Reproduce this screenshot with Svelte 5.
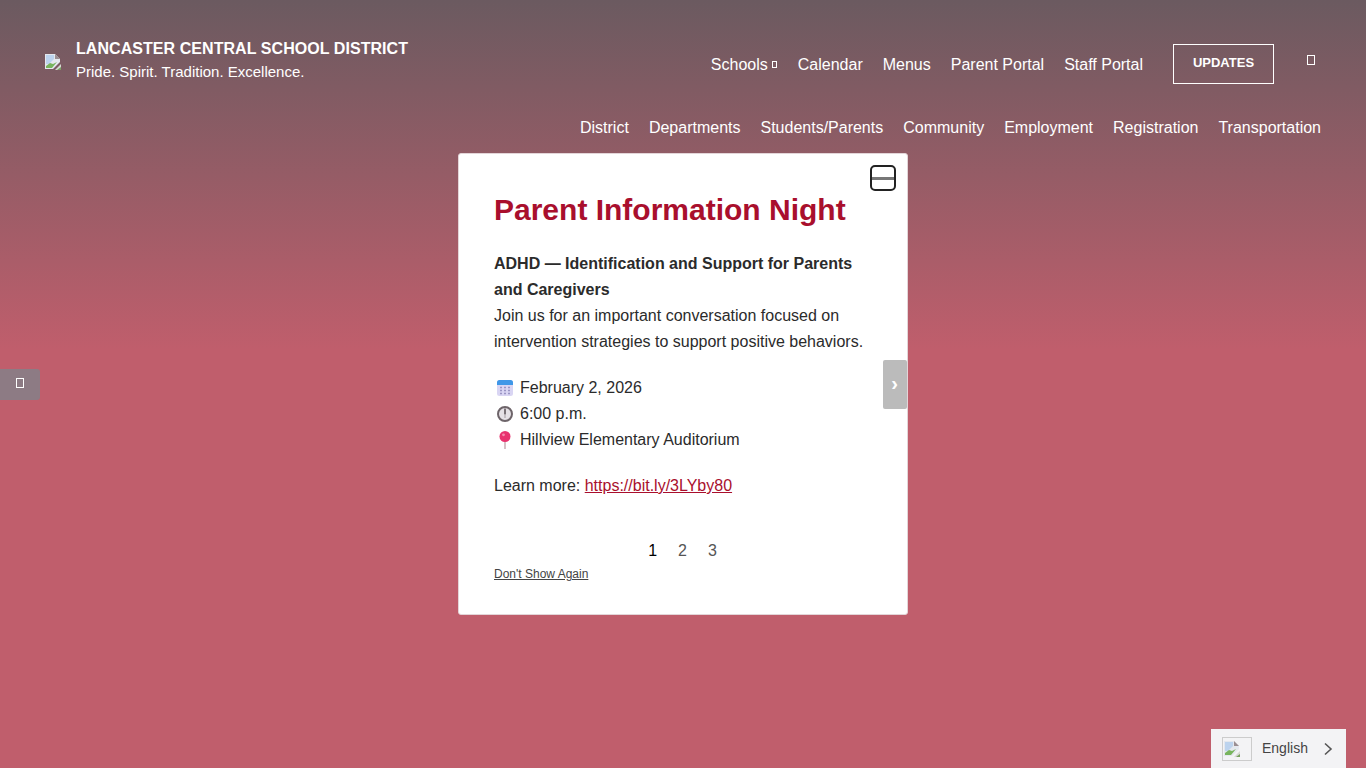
<script>
	const topLinks = ['Calendar', 'Menus', 'Parent Portal', 'Staff Portal'];
	const mainLinks = ['District', 'Departments', 'Students/Parents', 'Community', 'Employment', 'Registration', 'Transportation'];
	let page = $state(1);
</script>

{#snippet brokenImage()}
	<svg class="broken" width="16" height="16" viewBox="0 0 16 16" aria-hidden="true">
		<path d="M0 0h10l5 5v3l-7 7H0z" fill="#e4e8ee" />
		<path d="M1 1h8v4l-5 5H1z" fill="#bcd3ee" />
		<path d="M1 14v-2l4-3 3 1 4-2-5 6z" fill="#78b45e" />
		<path d="M10 0l5 5h-5z" fill="#9a8e92" />
		<path d="M16 10v6H10z" fill="#d5d8d2" />
		<path d="M16 13v3h-4z" fill="#78a060" />
	</svg>
{/snippet}

<div class="page">
	<header class="header">
		<div class="top">
			<a class="brand" href="#home">
				{@render brokenImage()}
				<span class="brand-text">
					<strong>LANCASTER CENTRAL SCHOOL DISTRICT</strong>
					<span>Pride. Spirit. Tradition. Excellence.</span>
				</span>
			</a>
			<nav class="top-nav">
				<a href="#schools">Schools<i class="tofu small"></i></a>
				{#each topLinks as link}
					<a href="#link">{link}</a>
				{/each}
				<a class="updates" href="#updates">UPDATES</a>
				<button class="search" aria-label="Search"><i class="tofu"></i></button>
			</nav>
		</div>
		<nav class="main-nav">
			{#each mainLinks as link}
				<a href="#link">{link}</a>
			{/each}
		</nav>
	</header>

	<button class="side-tab" aria-label="Accessibility"><i class="tofu"></i></button>

	<section class="modal">
		<button class="close" aria-label="Close"></button>
		<h2>Parent Information Night</h2>
		<p>
			<strong>ADHD — Identification and Support for Parents and Caregivers</strong><br />
			Join us for an important conversation focused on intervention strategies to support positive behaviors.
		</p>
		<ul class="details">
			<li>
				<svg width="18" height="18" viewBox="0 0 18 18" aria-hidden="true">
					<rect x="1" y="1" width="16" height="16" rx="2.5" fill="#d9d5f3" />
					<path d="M1 6V3.5A2.5 2.5 0 0 1 3.5 1h11A2.5 2.5 0 0 1 17 3.5V6z" fill="#3f97e8" />
					<path d="M4 8.5h2M8 8.5h2M12 8.5h2M4 11.5h2M8 11.5h2M12 11.5h2M4 14.5h2M8 14.5h2M12 14.5h2" stroke="#9a95c4" stroke-width="1.4" />
				</svg>
				February 2, 2026
			</li>
			<li>
				<svg width="18" height="18" viewBox="0 0 18 18" aria-hidden="true">
					<circle cx="9" cy="9" r="7" fill="#e6e1e6" stroke="#6d6469" stroke-width="2" />
					<path d="M9 3.5V9.5" stroke="#5f565b" stroke-width="1.6" />
					<path d="M9 9.5v3.5" stroke="#b0a8ae" stroke-width="1.2" />
				</svg>
				6:00 p.m.
			</li>
			<li>
				<svg width="18" height="18" viewBox="0 0 18 18" aria-hidden="true">
					<path d="M9 9v9" stroke="#c4a6ae" stroke-width="1.4" />
					<circle cx="9" cy="5.5" r="5.5" fill="#e8336f" />
					<circle cx="7.5" cy="3.8" r="1.4" fill="#f58bae" />
				</svg>
				Hillview Elementary Auditorium
			</li>
		</ul>
		<p class="more">Learn more: <a href="#more">https://bit.ly/3LYby80</a></p>
		<div class="pager">
			{#each [1, 2, 3] as n}
				<button class:active={page === n} onclick={() => (page = n)}>{n}</button>
			{/each}
		</div>
		<a class="dont-show" href="#hide">Don't Show Again</a>
		<button class="next" aria-label="Next slide">›</button>
	</section>

	<div class="lang">
		<span class="flag">{@render brokenImage()}</span>
		<span class="lang-name">English</span>
		<svg width="10" height="14" viewBox="0 0 10 14" aria-hidden="true">
			<path d="M2 1.5L8 7l-6 5.5" fill="none" stroke="#555" stroke-width="1.6" />
		</svg>
	</div>
</div>

<style>
	:global(body) {
		margin: 0;
		font-family: "Liberation Sans", Arial, sans-serif;
	}

	.page {
		height: 768px;
		overflow: hidden;
		background: linear-gradient(180deg, #6b5a60 0, #c05e6c 350px);
		color: #fff;
	}

	a {
		color: inherit;
		text-decoration: none;
	}

	button {
		font: inherit;
		background: none;
		border: none;
		padding: 0;
		color: inherit;
		cursor: pointer;
	}

	.header {
		padding: 39px 45px 0;
	}

	.top {
		display: flex;
		justify-content: space-between;
		align-items: flex-start;
	}

	.brand {
		display: flex;
		align-items: center;
		gap: 15px;
	}

	.brand .broken {
		margin-top: 4px;
	}

	.broken {
		display: block;
		flex: none;
	}

	.brand-text {
		display: flex;
		flex-direction: column;
		gap: 6px;
		padding-top: 1px;
		font-size: 15px;
		line-height: 18px;
	}

	.brand-text strong {
		font-size: 16px;
		line-height: 17px;
		letter-spacing: 0.06px;
	}

	.top-nav {
		display: flex;
		align-items: center;
		gap: 20px;
		font-size: 16px;
		margin-top: 5px;
		margin-right: 6px;
		line-height: 20px;
	}

	.top-nav > a:not(.updates) {
		padding-top: 2px;
	}

	.tofu {
		display: inline-block;
		width: 8px;
		height: 10px;
		border: 1px solid #fff;
		box-sizing: border-box;
	}

	.tofu.small {
		width: 5px;
		height: 7px;
		margin: 0 1px 0 4px;
		vertical-align: 2px;
	}

	.updates {
		width: 101px;
		height: 40px;
		line-height: 36px;
		box-sizing: border-box;
		border: 1px solid #fff;
		text-align: center;
		font-size: 13px;
		font-weight: 700;
		margin-left: 10px;
	}

	.search {
		margin: -8px 0 0 13px;
		width: 8px;
		line-height: 0;
	}

	.main-nav {
		display: flex;
		justify-content: flex-end;
		gap: 20px;
		margin-top: 35px;
		font-size: 16px;
		line-height: 18px;
	}

	.side-tab {
		position: fixed;
		left: 0;
		top: 369px;
		width: 40px;
		height: 31px;
		padding-bottom: 3px;
		background: #8d7b84;
		border-radius: 0 3px 3px 0;
		line-height: 0;
	}

	.modal {
		position: fixed;
		left: 458px;
		top: 153px;
		width: 450px;
		height: 462px;
		box-sizing: border-box;
		padding: 37px 35px 0;
		background: #fff;
		border: 1px solid #e3d5d8;
		border-radius: 3px;
		color: #2b2b2b;
		font-size: 16px;
		line-height: 26px;
	}

	.close {
		position: absolute;
		top: 11px;
		right: 11px;
		width: 26px;
		height: 26px;
		box-sizing: border-box;
		border: 2px solid #222;
		border-radius: 5px;
	}

	.close::after {
		content: "";
		display: block;
		height: 3px;
		background: #777;
	}

	h2 {
		margin: 0 0 23px;
		font-size: 30px;
		line-height: 37px;
		color: #a90f2d;
	}

	p {
		margin: 0;
	}

	.details {
		list-style: none;
		margin: 20px 0;
		padding: 0;
	}

	.details li {
		display: flex;
		align-items: center;
		gap: 6px;
		padding-left: 2px;
	}

	.more a {
		color: #a90f2d;
		text-decoration: underline;
	}

	.pager {
		display: flex;
		justify-content: center;
		gap: 21px;
		margin-top: 39px;
		padding-right: 1px;
		color: #555;
	}

	.pager .active {
		color: #000;
	}

	.dont-show {
		display: block;
		font-size: 12px;
		line-height: 14px;
		margin-top: 3px;
		color: #444;
		text-decoration: underline;
	}

	.next {
		position: absolute;
		right: 0;
		top: 206px;
		width: 24px;
		height: 49px;
		padding: 0 1px 4px 0;
		background: #bbb;
		border-radius: 2px;
		color: #fff;
		font-size: 20px;
		font-weight: 700;
		line-height: 36px;
	}

	.lang {
		position: fixed;
		left: 1211px;
		bottom: 0;
		width: 135px;
		height: 39px;
		display: flex;
		align-items: center;
		box-sizing: border-box;
		padding-left: 11px;
		background: #f3f3f5;
		color: #444;
		font-size: 14px;
	}

	.flag {
		width: 28px;
		height: 22px;
		border: 1px solid #ccc;
		margin-right: 10px;
		display: flex;
		align-items: center;
	}

	.flag .broken {
		margin-left: 1px;
	}

	.lang-name {
		width: 61px;
		padding-bottom: 1px;
	}
</style>
